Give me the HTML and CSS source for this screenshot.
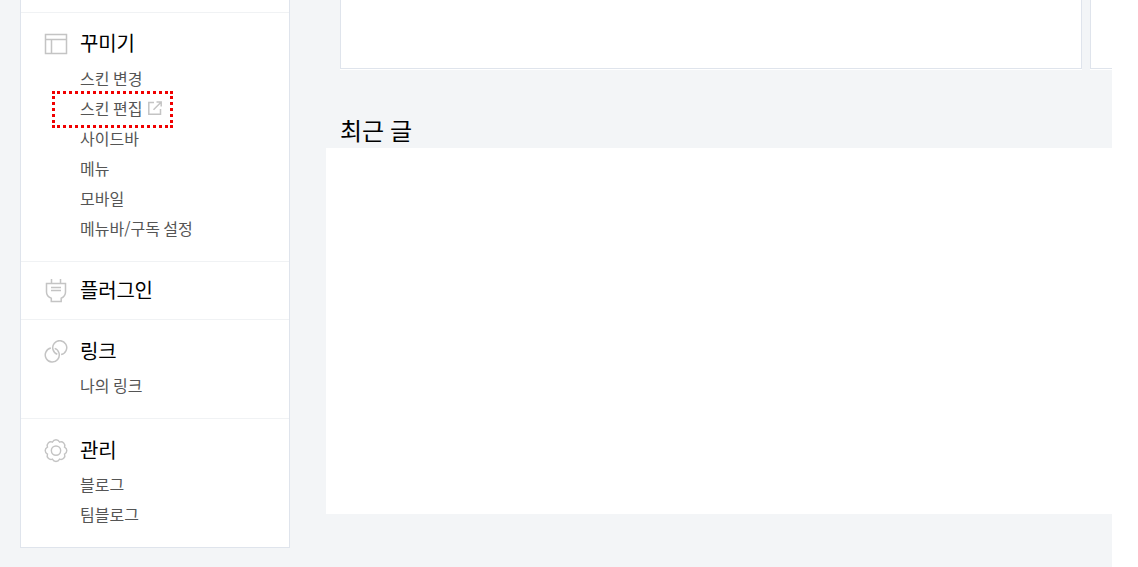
FILE: index.html
```html
<!DOCTYPE html>
<html lang="ko">
<head>
    <meta charset="UTF-8">
    <title>블로그 관리</title>
    <link rel="stylesheet" href="styles.css">
</head>
<body>
    <div class="wrap">
        <nav class="sidebar">
            <div class="menu menu-skin">
                <h2 class="menu-title">
                    <svg class="icon" viewBox="0 0 24 24"><path d="M1.5 2.5h21v19h-21zM1.5 7.5h21M7.5 7.5v14"/></svg>
                    꾸미기
                </h2>
                <ul class="menu-list">
                    <li><a>스킨 변경</a></li>
                    <li class="marked">
                        <a>스킨 편집</a>
                        <svg class="icon-out" viewBox="0 0 14 14"><path d="M6 1.5H.8v11.7h11.7V8M8.5 1h4.7v4.5M13 1.2 5.5 8.7"/></svg>
                    </li>
                    <li><a>사이드바</a></li>
                    <li><a>메뉴</a></li>
                    <li><a>모바일</a></li>
                    <li><a>메뉴바/구독 설정</a></li>
                </ul>
            </div>
            <div class="menu menu-plugin">
                <h2 class="menu-title">
                    <svg class="icon" viewBox="0 0 24 24"><path d="M2.5 4.5h19V13c0 3-1.6 5-4.3 6.200v3.200H7.300v-3.200C4 18 2.500 16 2.500 13zM7.500 0v4.500M16.500 0v4.500M7 8.500h10M7 11.500h10"/></svg>
                    플러그인
                </h2>
            </div>
            <div class="menu menu-link">
                <h2 class="menu-title">
                    <svg class="icon" viewBox="0 0 24 24"><path d="M10.7 8.4A7 7 0 1 1 6.9 8.1M13.3 14.2A7 7 0 1 1 17.1 14.5"/></svg>
                    링크
                </h2>
                <ul class="menu-list">
                    <li><a>나의 링크</a></li>
                </ul>
            </div>
            <div class="menu menu-manage">
                <h2 class="menu-title">
                    <svg class="icon" viewBox="-.6 -.2 25.2 25.2"><path d="M8.3 3A4.1 4.1 0 0 1 15.7 3A4.1 4.1 0 0 1 21 8.3A4.1 4.1 0 0 1 21 15.7A4.1 4.1 0 0 1 15.7 21A4.1 4.1 0 0 1 8.3 21A4.1 4.1 0 0 1 3 15.7A4.1 4.1 0 0 1 3 8.3A4.1 4.1 0 0 1 8.3 3z"/><circle cx="12" cy="12" r="4.9"/></svg>
                    관리
                </h2>
                <ul class="menu-list">
                    <li><a>블로그</a></li>
                    <li><a>팀블로그</a></li>
                </ul>
            </div>
        </nav>

        <div class="content">
            <div class="cards">
                <div class="card"></div>
                <div class="card card-side"></div>
            </div>
            <h2 class="content-title">최근 글</h2>
            <div class="recent"></div>
        </div>
    </div>
</body>
</html>
```

FILE: styles.css
```css
* {
    box-sizing: border-box;
}

body {
    margin: 0;
    background: #fff;
    font-family: "Noto Sans CJK KR", sans-serif;
    overflow: hidden;
}

h2, ul {
    margin: 0;
    padding: 0;
    font-weight: normal;
    list-style: none;
}

.wrap {
    display: flex;
    width: 1112px;
    height: 567px;
    padding-left: 20px;
    background: #f3f5f7;
}

.sidebar {
    flex: none;
    width: 270px;
    height: 548px;
    padding-top: 12px;
    background: #fff;
    border: 1px solid #dfe4ec;
    border-top: 0;
}

.menu {
    padding: 16px 24px 18px 23px;
    border-top: 1px solid #f0f2f4;
}

.menu-skin {
    padding: 15px 24px 18px 23px;
}

.menu-plugin {
    padding: 13px 24px 14px 23px;
}

.menu-manage {
    padding-bottom: 0;
}

.menu-title {
    display: flex;
    align-items: center;
    gap: 12px;
    height: 30px;
    font-size: 20px;
    letter-spacing: -0.2px;
    line-height: 30px;
    white-space: nowrap;
    color: #000;
}

.icon {
    flex: none;
    width: 24px;
    height: 24px;
    margin-top: 2px;
    fill: none;
    stroke: #c4c4c4;
    stroke-width: 1.5;
}

.menu-list {
    padding: 4px 0 0 36px;
}

.menu-skin .menu-list {
    padding-top: 5px;
}

.menu-list li {
    position: relative;
    display: flex;
    align-items: center;
    gap: 6px;
    height: 30px;
    font-size: 16px;
    line-height: 30px;
    word-spacing: -1px;
    white-space: nowrap;
    color: #555;
}

.icon-out {
    flex: none;
    width: 14px;
    height: 14px;
    fill: none;
    stroke: #c4c4c4;
    stroke-width: 1.5;
}

.marked::after {
    content: "";
    position: absolute;
    left: -28px;
    top: -2px;
    box-sizing: border-box;
    width: 121px;
    height: 37px;
    border: 3px dotted #f00000;
}

.content {
    flex: 1;
    min-width: 0;
    padding-left: 36px;
}

.cards {
    display: flex;
    gap: 8px;
    height: 70px;
    padding-left: 14px;
}

.card {
    flex: none;
    width: 742px;
    height: 69px;
    background: #fff;
    border: 1px solid #dfe4ec;
    border-top: 0;
    box-shadow: 0 1px 0 #fff;
}

.card-side {
    flex: 1;
    width: auto;
    border-right: 0;
}

.content-title {
    height: 78px;
    padding: 42px 0 0 14px;
    font-size: 24px;
    line-height: 36px;
    word-spacing: -1px;
    color: #000;
}

.recent {
    height: 366px;
    background: #fff;
}
```
